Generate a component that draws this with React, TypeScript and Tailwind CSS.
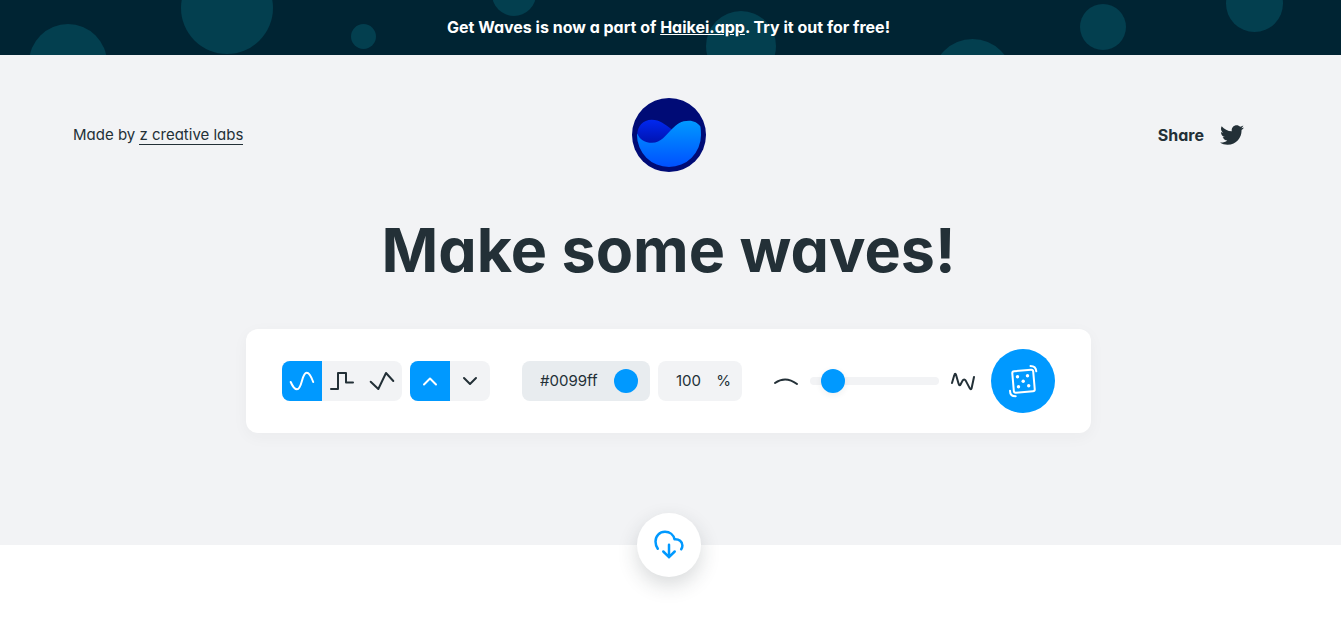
import { useState, type ReactNode } from "react";
import { FaTwitter } from "react-icons/fa";

const bubbles = [
  [68, 63, 39],
  [227, 8, 46],
  [363.5, 36.5, 12.5],
  [514, -6, 22],
  [741, 46, 35],
  [972.5, 79, 40],
  [1103, 27, 23],
  [1254.5, 3.5, 28.5],
];

function Banner() {
  return (
    <div className="relative overflow-hidden bg-[#002433] pt-[15px] pb-4 pr-1 text-center">
      <svg className="absolute top-0 left-0 h-full w-full" viewBox="0 0 1341 55" preserveAspectRatio="xMidYMid slice" aria-hidden="true">
        {bubbles.map(([cx, cy, r]) => (
          <circle key={cx} cx={cx} cy={cy} r={r} fill="#033f4f" />
        ))}
      </svg>
      <p className="relative text-base leading-6 font-bold text-white">
        Get Waves is now a part of{" "}
        <a href="#haikei" className="underline">
          Haikei.app
        </a>
        . Try it out for free!
      </p>
    </div>
  );
}

function Logo() {
  return (
    <svg className="h-[74px] w-[74px]" viewBox="0 0 74 74" role="img" aria-label="Get Waves">
      <defs>
        <linearGradient id="front" x1="0" y1="0" x2="0" y2="1">
          <stop offset="0" stopColor="#0099ff" />
          <stop offset="1" stopColor="#0050ff" />
        </linearGradient>
        <linearGradient id="back" x1="0" y1="0" x2="0" y2="1">
          <stop offset="0" stopColor="#0028f0" />
          <stop offset="1" stopColor="#0010a8" />
        </linearGradient>
      </defs>
      <circle cx="37" cy="37" r="37" fill="#000b76" />
      <path d="M5.2 37C5.5 28 11 21.7 19.7 21.7C28 21.7 33 26.5 39.7 31.3L36 42L20 48L6 44Z" fill="url(#back)" />
      <path d="M5.2 35.5C8 42 13 44.8 20 44.8C29 44.8 34 37 39.7 31.3C45 26 49 22.7 57 22.7C62 22.7 66 25 68.4 28.5C68.8 31 69 34 69 37A32 32 0 0 1 5 37Z" fill="url(#front)" />
    </svg>
  );
}

const line = { fill: "none", stroke: "currentColor", strokeWidth: 2, strokeLinecap: "round", strokeLinejoin: "round" } as const;

const shapes = [
  { id: "Smooth", d: "M8.7 21C10.2 24.5 12.2 28.3 15 28.3C20.3 28.3 19.5 11.7 24.7 11.7C27.8 11.7 29.8 17 31.2 21" },
  { id: "Steps", d: "M9 28H16V12H24V21.5H31" },
  { id: "Peaks", d: "M8.7 20.7L16.3 28L24 12L31.3 20" },
];

const directions = [
  { id: "Up", d: "M14 23.5L20 17.5L26 23.5" },
  { id: "Down", d: "M14 17L20 23L26 17" },
];

type GroupProps = {
  label: string;
  options: { id: string; d: string }[];
  value: string;
  onChange: (id: string) => void;
};

function ToggleGroup({ label, options, value, onChange }: GroupProps) {
  return (
    <div role="group" aria-label={label} className="flex overflow-hidden rounded-lg bg-[#f2f3f5]">
      {options.map((o) => (
        <button
          key={o.id}
          type="button"
          aria-label={o.id}
          aria-pressed={value === o.id}
          onClick={() => onChange(o.id)}
          className={value === o.id ? "h-10 w-10 bg-[#0099ff] text-white" : "h-10 w-10 text-[#233037]"}
        >
          <svg viewBox="0 0 40 40" {...line}>
            <path d={o.d} />
          </svg>
        </button>
      ))}
    </div>
  );
}

function Glyph({ children }: { children: ReactNode }) {
  return (
    <svg className="h-6 w-6 shrink-0" viewBox="0 0 24 24" aria-hidden="true" {...line}>
      {children}
    </svg>
  );
}

function Controls() {
  const [shape, setShape] = useState("Smooth");
  const [direction, setDirection] = useState("Up");
  const [color, setColor] = useState("#0099ff");
  const [opacity, setOpacity] = useState("100");
  const [complexity, setComplexity] = useState(10);

  return (
    <section className="flex items-center rounded-xl bg-white px-9 py-5 shadow-[0_4px_16px_rgba(39,48,54,0.04)]">
      <div className="flex gap-2">
        <ToggleGroup label="Wave shape" options={shapes} value={shape} onChange={setShape} />
        <ToggleGroup label="Wave direction" options={directions} value={direction} onChange={setDirection} />
      </div>
      <div className="ml-8 flex gap-2">
        <div className="flex h-10 w-32 items-center rounded-lg bg-[#e8ecef] pr-3 pl-[18px]">
          <input aria-label="Wave color" value={color} onChange={(e) => setColor(e.target.value)} className="w-full min-w-0 bg-transparent text-[15px] outline-none" />
          <button type="button" aria-label="Pick a color" className="h-6 w-6 shrink-0 rounded-full" style={{ backgroundColor: color }} />
        </div>
        <div className="flex h-10 w-[84px] items-center rounded-lg bg-[#f2f3f5] pr-[11px] pl-[18px] text-[15px]">
          <input id="opacity" aria-label="Opacity" value={opacity} onChange={(e) => setOpacity(e.target.value)} className="w-full min-w-0 bg-transparent outline-none" />
          <label htmlFor="opacity">%</label>
        </div>
      </div>
      <div className="ml-8 flex items-center gap-3">
        <Glyph>
          <path d="M1 14C8 9 15 9 23 15" />
        </Glyph>
        <input
          type="range"
          aria-label="Complexity"
          min={0}
          max={100}
          value={complexity}
          onChange={(e) => setComplexity(Number(e.target.value))}
          className="h-2 w-[129px] appearance-none rounded-full bg-[#f2f3f5] [&::-webkit-slider-thumb]:h-6 [&::-webkit-slider-thumb]:w-6 [&::-webkit-slider-thumb]:appearance-none [&::-webkit-slider-thumb]:rounded-full [&::-webkit-slider-thumb]:bg-[#0099ff] [&::-webkit-slider-thumb]:shadow-[0_2px_6px_rgba(39,48,54,0.08)]"
        />
        <Glyph>
          <path d="M1 14L3.4 5.8C3.8 4.3 4.6 4.3 5 5.8L7.6 14.8C8.2 16.8 9 16.8 9.8 15L11.6 11.6C12.5 10.2 13.8 10.2 14.7 11.6L18.8 19.4C19.4 20.5 20.3 20.4 20.6 19.2L23 8" />
        </Glyph>
      </div>
      <button type="button" aria-label="Randomize wave" className="ml-4 h-16 w-16 rounded-full bg-[#0099ff] text-white">
        <svg viewBox="0 0 64 64" {...line}>
          <rect x="22" y="21.5" width="21" height="21.5" rx="2" transform="rotate(-5 32.5 32)" />
          <path d="M39.5 17C43 17 45 19 45.3 22.3M19 41.7C19 45.5 21 47.3 24.7 47.3" />
          <g fill="currentColor" stroke="none">
            <circle cx="26.5" cy="27.7" r="1.7" />
            <circle cx="36.5" cy="26.7" r="1.7" />
            <circle cx="32.2" cy="32.2" r="1.7" />
            <circle cx="27.5" cy="37.7" r="1.7" />
            <circle cx="37.7" cy="36.7" r="1.7" />
          </g>
        </svg>
      </button>
    </section>
  );
}

export default function App() {
  return (
    <div className="min-h-screen bg-white font-['Inter',sans-serif] text-[#233037] [font-feature-settings:'cv11'_1]">
      <Banner />
      <main className="flex flex-col items-center bg-[#f2f3f5] pt-[43px] pr-1">
        <header className="grid w-full grid-cols-[1fr_auto_1fr] items-center pr-[93px] pl-[73px]">
          <p className="text-[15px] leading-6">
            Made by{" "}
            <a href="#labs" className="border-b border-[#233037]">
              z creative labs
            </a>
          </p>
          <div className="ml-5">
            <Logo />
          </div>
          <a href="#share" className="flex items-center gap-4 justify-self-end text-base leading-6 font-bold">
            Share
            <FaTwitter className="h-6 w-6" aria-hidden="true" />
          </a>
        </header>
        <h1 className="mt-10 text-[61px] leading-[76px] font-bold">Make some waves!</h1>
        <div className="mt-[41px]">
          <Controls />
        </div>
        <button
          type="button"
          aria-label="Download wave"
          className="mt-20 -mb-8 h-16 w-16 rounded-full bg-white text-[#0099ff] shadow-[0_8px_20px_rgba(39,48,54,0.18)]"
        >
          <svg viewBox="0 0 64 64" {...line} strokeWidth={2.5}>
            <path d="M20.8 35.8C19 33 18.5 31 18.5 28.5C18.5 23 22.5 18.8 28 18.8C33 18.8 36.5 22 37.5 26.2C42 25.8 45.4 28.6 45.4 32.4C45.4 34 45 35 44.2 36.2" />
            <path d="M32 31.7V44.2M26.3 38.5L32 44.2L37.7 38.5" />
          </svg>
        </button>
      </main>
    </div>
  );
}
